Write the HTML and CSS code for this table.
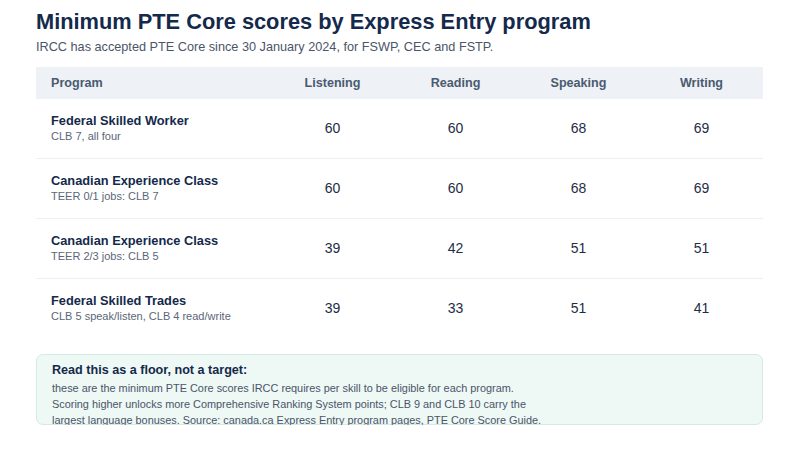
FILE: index.html
```html
<!DOCTYPE html>
<html lang="en">
<head>
<meta charset="utf-8">
<title>Minimum PTE Core scores by Express Entry program</title>
<link rel="stylesheet" href="styles.css">
</head>
<body>
<main class="page">
  <h1 class="title">Minimum PTE Core scores by Express Entry program</h1>
  <p class="subtitle">IRCC has accepted PTE Core since 30 January 2024, for FSWP, CEC and FSTP.</p>
  <table class="scores">
    <thead>
      <tr>
        <th class="col-program">Program</th>
        <th>Listening</th>
        <th>Reading</th>
        <th>Speaking</th>
        <th>Writing</th>
      </tr>
    </thead>
    <tbody>
      <tr>
        <td class="col-program"><div class="prog-name">Federal Skilled Worker</div><div class="prog-note">CLB 7, all four</div></td>
        <td>60</td><td>60</td><td>68</td><td>69</td>
      </tr>
      <tr>
        <td class="col-program"><div class="prog-name">Canadian Experience Class</div><div class="prog-note">TEER 0/1 jobs: CLB 7</div></td>
        <td>60</td><td>60</td><td>68</td><td>69</td>
      </tr>
      <tr>
        <td class="col-program"><div class="prog-name">Canadian Experience Class</div><div class="prog-note">TEER 2/3 jobs: CLB 5</div></td>
        <td>39</td><td>42</td><td>51</td><td>51</td>
      </tr>
      <tr>
        <td class="col-program"><div class="prog-name">Federal Skilled Trades</div><div class="prog-note">CLB 5 speak/listen, CLB 4 read/write</div></td>
        <td>39</td><td>33</td><td>51</td><td>41</td>
      </tr>
    </tbody>
  </table>
  <aside class="note">
    <p class="note-head">Read this as a floor, not a target:</p>
    <p class="note-body">these are the minimum PTE Core scores IRCC requires per skill to be eligible for each program.<br>Scoring higher unlocks more Comprehensive Ranking System points; CLB 9 and CLB 10 carry the<br>largest language bonuses. Source: canada.ca Express Entry program pages, PTE Core Score Guide.</p>
  </aside>
</main>
</body>
</html>
```

FILE: styles.css
```css
* { box-sizing: border-box; }
html, body { margin: 0; padding: 0; background: #ffffff; }
body {
  font-family: "Liberation Sans", Arial, sans-serif;
  color: #1b2c46;
}
.page {
  width: 727px;
  margin-left: 36px;
  padding-top: 8px;
}
.title {
  margin: 0;
  font-size: 21.8px;
  line-height: 27px;
  font-weight: 700;
  color: #14294b;
}
.subtitle {
  margin: 4px 0 0 0;
  font-size: 12.7px;
  line-height: 16px;
  color: #4a5568;
}
.scores {
  width: 100%;
  margin-top: 12px;
  border-collapse: collapse;
  table-layout: fixed;
}
.scores th {
  background: #eef2f6;
  height: 32px;
  font-size: 12.6px;
  font-weight: 700;
  color: #4a5a70;
  text-align: center;
  padding: 0;
}
.scores th.col-program, .scores td.col-program {
  width: 235px;
  text-align: left;
  padding-left: 15px;
}
.scores td {
  height: 60px;
  text-align: center;
  font-size: 14px;
  color: #1e2d45;
  border-bottom: 1px solid #edf0f3;
  padding: 0;
}
.scores tbody tr:first-child td { height: 59px; }
.scores tbody tr:last-child td { border-bottom-color: transparent; }
.prog-name {
  font-size: 12.8px;
  font-weight: 700;
  line-height: 16px;
  color: #14294b;
}
.prog-note {
  font-size: 11px;
  line-height: 15px;
  color: #5a6678;
  margin-top: 0;
}
.note {
  margin-top: 15px;
  height: 71px;
  background: #eef8f5;
  border: 1px solid #d3ebe2;
  border-radius: 7px;
  padding: 7px 15px 0 15px;
}
.note-head {
  margin: 0;
  font-size: 12.6px;
  line-height: 16px;
  font-weight: 700;
  color: #14294b;
}
.note-body {
  margin: 2px 0 0 0;
  font-size: 10.9px;
  line-height: 16px;
  color: #4a5568;
}
```
